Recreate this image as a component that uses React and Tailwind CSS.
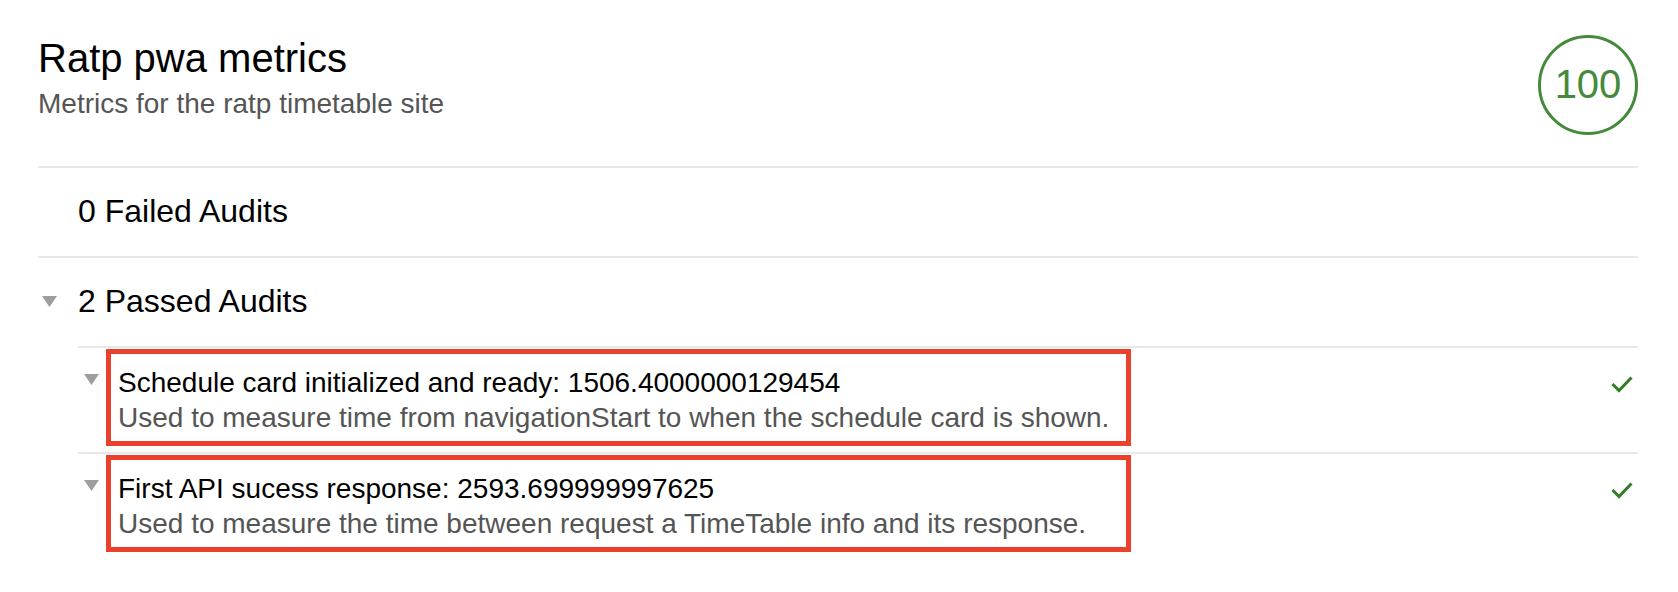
import React from "react";

function Tri({ className }) {
  return (
    <svg className={className} width="15" height="11" viewBox="0 0 15 11">
      <polygon points="0,0 15,0 7.5,11" fill="#9e9e9e" />
    </svg>
  );
}

function Check() {
  return (
    <svg width="22" height="17" viewBox="0 0 22 17">
      <polyline
        points="1.5,8 8,14.5 20.5,1.5"
        fill="none"
        stroke="#317d2a"
        strokeWidth="3"
      />
    </svg>
  );
}

function Row({ title, desc }) {
  return (
    <div className="border-t-2 border-[#e8e8e8] pt-[1px] pb-[6px] flex items-start">
      <div className="w-[28px] shrink-0 pt-[25px] pl-[5.5px]">
        <Tri />
      </div>
      <div className="w-[1025px] border-[5px] border-[#e9412b] pt-[11px] pb-[6px] pl-[7px]">
        <div className="text-[28px] leading-[35px] text-black whitespace-nowrap">{title}</div>
        <div className="text-[28px] leading-[35px] text-[#555555] whitespace-nowrap">{desc}</div>
      </div>
      <div className="flex-1" />
      <div className="pt-[27px] mr-[5px]">
        <Check />
      </div>
    </div>
  );
}

export default function App() {
  return (
    <div className="bg-white w-[1678px] h-[592px] overflow-hidden pl-[38px] pr-[40px] pt-[34px] font-['Liberation_Sans',Arial,sans-serif]">
      <div className="flex justify-between items-start">
        <div>
          <div className="text-[40px] leading-[48px] text-black">Ratp pwa metrics</div>
          <div className="text-[28px] leading-[36px] mt-[4px] text-[#555555]">
            Metrics for the ratp timetable site
          </div>
        </div>
        <div className="mt-[1px] w-[100px] h-[100px] rounded-full border-[3px] border-[#448a3a] flex items-center justify-center pb-[3px]">
          <span className="text-[40px] leading-[40px] text-[#448a3a]">100</span>
        </div>
      </div>

      <div className="mt-[31px] border-t-2 border-[#e8e8e8] pt-[23px] pb-[25px] pl-[40px] text-[32px] leading-[40px] text-black">
        0 Failed Audits
      </div>

      <div className="border-t-2 border-[#e8e8e8]">
        <div className="flex items-center pt-[23px] pb-[25px]">
          <div className="w-[40px] shrink-0 pl-[3.5px] flex items-center">
            <Tri />
          </div>
          <div className="text-[32px] leading-[40px] text-black">2 Passed Audits</div>
        </div>
        <div className="ml-[40px]">
          <Row
            title="Schedule card initialized and ready: 1506.4000000129454"
            desc="Used to measure time from navigationStart to when the schedule card is shown."
          />
          <Row
            title="First API sucess response: 2593.699999997625"
            desc="Used to measure the time between request a TimeTable info and its response."
          />
        </div>
      </div>
    </div>
  );
}
